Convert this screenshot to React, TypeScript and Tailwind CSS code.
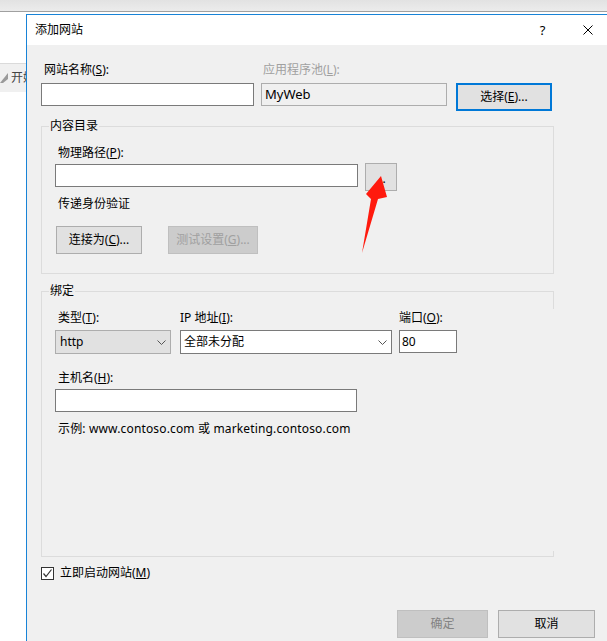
import type { ReactNode } from "react"

const FONT = "font-['Noto_Sans','Noto_Sans_CJK_SC',sans-serif]"

function Label({ children, className = "" }: { children: ReactNode; className?: string }) {
    return <div className={`h-[16px] text-[12px] leading-[16px] text-black whitespace-nowrap ${className}`}>{children}</div>
}

function Btn({ children, className = "", disabled = false }: { children: ReactNode; className?: string; disabled?: boolean }) {
    return (
        <div
            className={`h-[28px] flex items-center justify-center border text-[12px] leading-[16px] ${
                disabled ? "bg-[#cccccc] border-[#bfbfbf] text-[#a0a0a0]" : "bg-[#e1e1e1] border-[#adadad] text-black"
            } ${className}`}
        >
            {children}
        </div>
    )
}

function Chevron() {
    return (
        <svg width="9" height="5" viewBox="0 0 9 5" className="shrink-0">
            <polyline points="0.5,0.5 4.5,4.5 8.5,0.5" fill="none" stroke="#555" strokeWidth="1" />
        </svg>
    )
}

export default function App() {
    return (
        <div className={`relative w-[607px] h-[641px] overflow-hidden bg-white ${FONT}`}>
            {/* background window */}
            <div className="h-[11px] bg-gradient-to-b from-[#e2e2e2] to-[#ececec]" />
            <div className="h-[1px] bg-[#a0a0a0]" />
            <div className="absolute left-0 top-[63px] w-[40px] h-[29px] bg-[#f0f0f0] border-t border-[#dadada] flex items-center gap-[3px] pl-0">
                <svg width="8" height="10" viewBox="0 0 8 10">
                    <polygon points="0,10 8,0 8,6 3,10" fill="#9a9a9a" />
                </svg>
                <span className="text-[12px] leading-[16px] text-[#444]">开始</span>
            </div>

            {/* dialog */}
            <div className="absolute left-[26px] top-[14px] w-[584px] h-[627px] border-l border-t border-[#1883d7] bg-[#f0f0f0] flex flex-col">
                <div className="h-[30px] bg-white flex items-center">
                    <div className="pl-[8px] text-[12px] leading-[16px] text-black">添加网站</div>
                    <div className="ml-auto w-[45px] flex justify-center text-[13px] leading-[16px] text-black">?</div>
                    <div className="w-[45px] flex justify-center">
                        <svg width="10" height="10" viewBox="0 0 10 10">
                            <path d="M0.5 0.5 L9.5 9.5 M9.5 0.5 L0.5 9.5" stroke="#000" strokeWidth="1" />
                        </svg>
                    </div>
                </div>

                <div className="pl-[14px] pt-[17px] flex flex-col">
                    {/* site name row */}
                    <div className="flex items-start">
                        <div className="w-[213px]">
                            <Label className="pl-[3px]">网站名称(<u>S</u>):</Label>
                            <div className="mt-[5px] h-[23px] bg-white border border-[#7a7a7a]" />
                        </div>
                        <div className="ml-[7px] w-[186px]">
                            <Label className="pl-[2px] !text-[#a0a0a0]">应用程序池(<u>L</u>):</Label>
                            <div className="mt-[5px] h-[23px] bg-[#f0f0f0] border border-[#adadad] flex items-center pl-[3px] text-[13px] text-black">MyWeb</div>
                        </div>
                        <Btn className="ml-[9px] mt-[21px] w-[96px] h-[27px] !border-2 !border-[#0078d7]">选择(<u>E</u>)...</Btn>
                    </div>

                    {/* content directory */}
                    <div className="mt-[15px] w-[513px] h-[148px] border border-[#dcdcdc]">
                        <Label className="-mt-[9px] ml-[7px] px-[1px] w-fit bg-[#f0f0f0]">内容目录</Label>
                        <div className="pl-[13px]">
                            <Label className="mt-[11px] pl-[3px]">物理路径(<u>P</u>):</Label>
                            <div className="mt-[2px] flex items-start">
                                <div className="mt-[1px] w-[303px] h-[23px] bg-white border border-[#7a7a7a]" />
                                <Btn className="ml-[7px] w-[32px]">
                                    <span className="pt-[3px]">...</span>
                                </Btn>
                            </div>
                            <Label className="mt-[5px] pl-[3px]">传递身份验证</Label>
                            <div className="mt-[14px] flex">
                                <Btn className="ml-[1px] w-[86px]">连接为(<u>C</u>)...</Btn>
                                <Btn disabled className="ml-[26px] w-[90px]">测试设置(<u>G</u>)...</Btn>
                            </div>
                        </div>
                    </div>

                    {/* binding */}
                    <div className="mt-[17px] w-[513px] h-[266px] border-l border-t border-b border-[#dcdcdc] flex">
                        <div className="flex-1">
                            <Label className="-mt-[9px] ml-[7px] px-[1px] w-fit bg-[#f0f0f0]">绑定</Label>
                            <div className="pl-[13px]">
                                <div className="mt-[11px] flex items-start">
                                    <div className="w-[116px]">
                                        <Label className="pl-[3px]">类型(<u>T</u>):</Label>
                                        <div className="mt-[4px] h-[24px] bg-[#e1e1e1] border border-[#adadad] flex items-center pl-[4px] pr-[4px] text-[12px] text-black">
                                            <span className="flex-1">http</span>
                                            <Chevron />
                                        </div>
                                    </div>
                                    <div className="ml-[9px] w-[212px]">
                                        <Label>IP 地址(<u>I</u>):</Label>
                                        <div className="mt-[4px] h-[24px] bg-white border border-[#7a7a7a] flex items-center pl-[3px] pr-[4px] text-[12px] text-black">
                                            <span className="flex-1">全部未分配</span>
                                            <Chevron />
                                        </div>
                                    </div>
                                    <div className="ml-[7px] w-[58px]">
                                        <Label>端口(<u>O</u>):</Label>
                                        <div className="mt-[4px] h-[23px] bg-white border border-[#7a7a7a] flex items-center pl-[2px] text-[12px] text-black">80</div>
                                    </div>
                                </div>
                                <Label className="mt-[16px] pl-[3px]">主机名(<u>H</u>):</Label>
                                <div className="mt-[3px] w-[302px] h-[23px] bg-white border border-[#7a7a7a]" />
                                <Label className="mt-[9px] pl-[3px] tracking-[0.15px]">示例: www.contoso.com 或 marketing.contoso.com</Label>
                            </div>
                        </div>
                        <div className="w-[1px] flex flex-col">
                            <div className="h-[17px] bg-[#dcdcdc]" />
                            <div className="flex-1" />
                            <div className="h-[5px] bg-[#dcdcdc]" />
                        </div>
                    </div>

                    {/* start now */}
                    <div className="mt-[8px] h-[16px] flex items-center">
                        <div className="w-[13px] h-[13px] border border-[#333] bg-white flex items-center justify-center">
                            <svg width="11" height="11" viewBox="0 0 11 11">
                                <polyline points="1.5,5.5 4,8.5 9.5,1.5" fill="none" stroke="#333" strokeWidth="1.2" />
                            </svg>
                        </div>
                        <Label className="ml-[6px]">立即启动网站(<u>M</u>)</Label>
                    </div>

                    {/* footer */}
                    <div className="mt-[29px] pr-[15px] flex justify-end gap-[10px]">
                        <Btn disabled className="w-[91px] !text-[#838383]">确定</Btn>
                        <Btn className="w-[97px]">取消</Btn>
                    </div>
                </div>
            </div>

            {/* red annotation arrow */}
            <svg className="absolute inset-0 pointer-events-none" width="607" height="641" viewBox="0 0 607 641">
                <polygon points="362,253 371,199 366,194 381,176 387,197 378,199" fill="#ff1a0e" />
            </svg>
        </div>
    )
}
